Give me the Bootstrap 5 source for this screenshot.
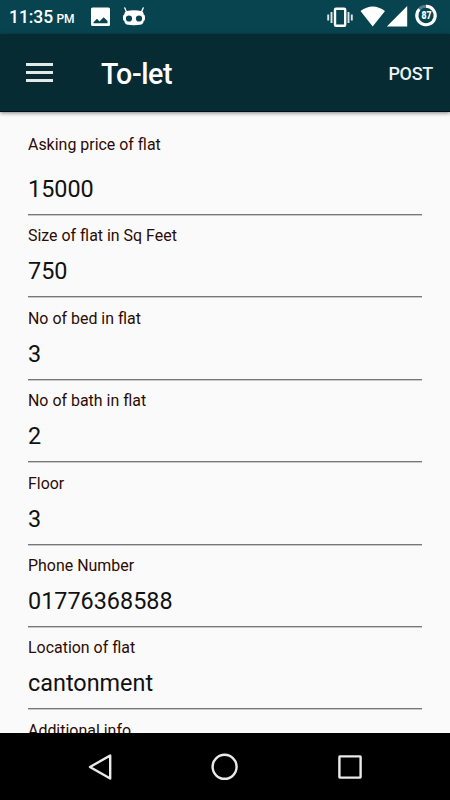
<!DOCTYPE html>
<html lang="en">
<head>
<meta charset="utf-8">
<meta name="viewport" content="width=device-width, initial-scale=1">
<title>To-let</title>
<link href="https://cdn.jsdelivr.net/npm/bootstrap@5.3.0/dist/css/bootstrap.min.css" rel="stylesheet">
<style>
body{font-family:Roboto,sans-serif;background:#fafafa;height:800px}
.status-bar{height:34px;background:#084450;padding:0 12px 0 9px}
.clock{font-size:17.5px;line-height:34px;padding-top:2px;font-weight:500;width:82px;letter-spacing:-.05px}
.clock span{font-size:12px;margin-left:-1px}
.robot{margin-left:13px}
.app-bar{height:78px;background:#062b33;border-bottom:1px solid #000f14;box-shadow:0 1px 4px rgba(0,0,0,.5);padding:0 17px 0 26px;z-index:1}
.app-title{font-size:28.6px;font-weight:500;line-height:76px;padding-top:3px;margin-left:48px;letter-spacing:-.4px}
.post{font-size:18px;font-weight:500;line-height:76px;padding-top:2px;color:#eef3f3;letter-spacing:-.3px}
.form-area{padding:20px 28px 0}
.field{height:82.45px}
.field.first{height:83.2px}
.field label{display:block;font-size:15.95px;line-height:20px;color:#2c0b05;padding-top:11px}
.field.first label{padding-top:3px}
.field input{display:block;width:100%;border:0;border-radius:0;border-bottom:1px solid #777;box-shadow:0 1px #c8c8c8;background:none;padding:0;font-size:23.4px;color:#111;outline:0;height:51px}
.field.first input{height:60px;padding-top:8px}
.nav-keys{height:67px}
svg{display:block;flex:none}
</style>
<script src="https://cdn.jsdelivr.net/npm/bootstrap@5.3.0/dist/js/bootstrap.bundle.min.js"></script>
</head>
<body class="d-flex flex-column overflow-hidden m-0">
<div class="status-bar d-flex align-items-center text-white flex-shrink-0">
  <div class="clock text-nowrap">11:35 <span>PM</span></div>
  <!-- picture -->
  <svg width="19" height="34" fill="#fff"><path fill-rule="evenodd" d="M1.500 7.500h16a1.500 1.500 0 0 1 1.500 1.500V24.500a1.500 1.500 0 0 1-1.500 1.500H1.500a1.500 1.500 0 0 1-1.500-1.500V9a1.500 1.500 0 0 1 1.500-1.500zM2.500 23.300h14v-2.300l-3.800-3.700-4.200 4.300-2.500-2.800-3.500 3.500z"/></svg>
  <!-- robot head -->
  <svg class="robot" width="22" height="34" viewBox="0 0 22 34"><path d="M1.800 8l2 4.500M20.200 8l-2 4.500" stroke="#fff" stroke-width="1.400" fill="none" stroke-linecap="round"/><path fill="#fff" fill-rule="evenodd" d="M3 11.200Q11 9.400 19 11.200Q20.600 12 20.700 14.500Q22 14.500 22 17v2q0 1.800-1.300 1.900Q20.500 24 18.500 24.500Q11 25.800 3.500 24.500Q1.500 24 1.300 20.900Q0 20.800 0 19v-2q0-2.500 1.300-2.500Q1.400 12 3 11.200zM6 15.400a3.100 3.100 0 1 0 0 6.200a3.100 3.100 0 0 0 0-6.200zM16 15.400a3.100 3.100 0 1 0 0 6.200a3.100 3.100 0 0 0 0-6.200z"/></svg>
  <!-- vibrate, wifi, signal, battery -->
  <svg class="ms-auto" width="111" height="34" viewBox="327 0 111 34">
    <path d="M328.200 14.500v6M331.500 12v11M348.500 12v11M351.800 14.500v6" stroke="#dce6e8" stroke-width="1.900"/>
    <rect x="335" y="8.800" width="10.200" height="17" rx="1" fill="none" stroke="#fff" stroke-width="2.400"/>
    <path fill="#fff" d="M360.500 11Q372.700 1.800 385 11L372.700 26.500zM407.200 6v20.500h-20.400z"/>
    <circle cx="426" cy="15.500" r="9.200" fill="none" stroke="#547f87" stroke-width="3"/>
    <path d="M426 6.300a9.200 9.200 0 1 1-6.700 2.900" fill="none" stroke="#fff" stroke-width="3"/>
    <text x="426.500" y="19.300" text-anchor="middle" font-family="Roboto" font-size="10.500" font-weight="900" fill="#fff" textLength="10" lengthAdjust="spacingAndGlyphs">87</text>
  </svg>
</div>
<header class="app-bar d-flex align-items-center text-white flex-shrink-0 position-relative">
  <svg width="27" height="19" fill="#e3e8e8"><path d="M0 0h27v3H0zM0 8h27v3H0zM0 16h27v3H0z"/></svg>
  <div class="app-title">To-let</div>
  <div class="post ms-auto">POST</div>
</header>
<main class="form-area flex-grow-1 overflow-hidden">
  <div class="field first"><label>Asking price of flat</label><input value="15000"></div>
  <div class="field"><label>Size of flat in Sq Feet</label><input value="750"></div>
  <div class="field"><label>No of bed in flat</label><input value="3"></div>
  <div class="field"><label>No of bath in flat</label><input value="2"></div>
  <div class="field"><label>Floor</label><input value="3"></div>
  <div class="field"><label>Phone Number</label><input value="01776368588"></div>
  <div class="field"><label>Location of flat</label><input value="cantonment"></div>
  <div class="field"><label>Additional info</label></div>
</main>
<nav class="nav-keys bg-black flex-shrink-0 d-flex justify-content-center">
  <svg width="450" height="67" viewBox="0 733 450 67" fill="none" stroke="#eaeaea" stroke-width="2.400" stroke-linejoin="round"><path d="M110.200 755.500v23L90 767z"/><circle cx="224.600" cy="766.800" r="12"/><rect x="339.400" y="756.400" width="21.200" height="21.200" rx=".5"/></svg>
</nav>
</body>
</html>
